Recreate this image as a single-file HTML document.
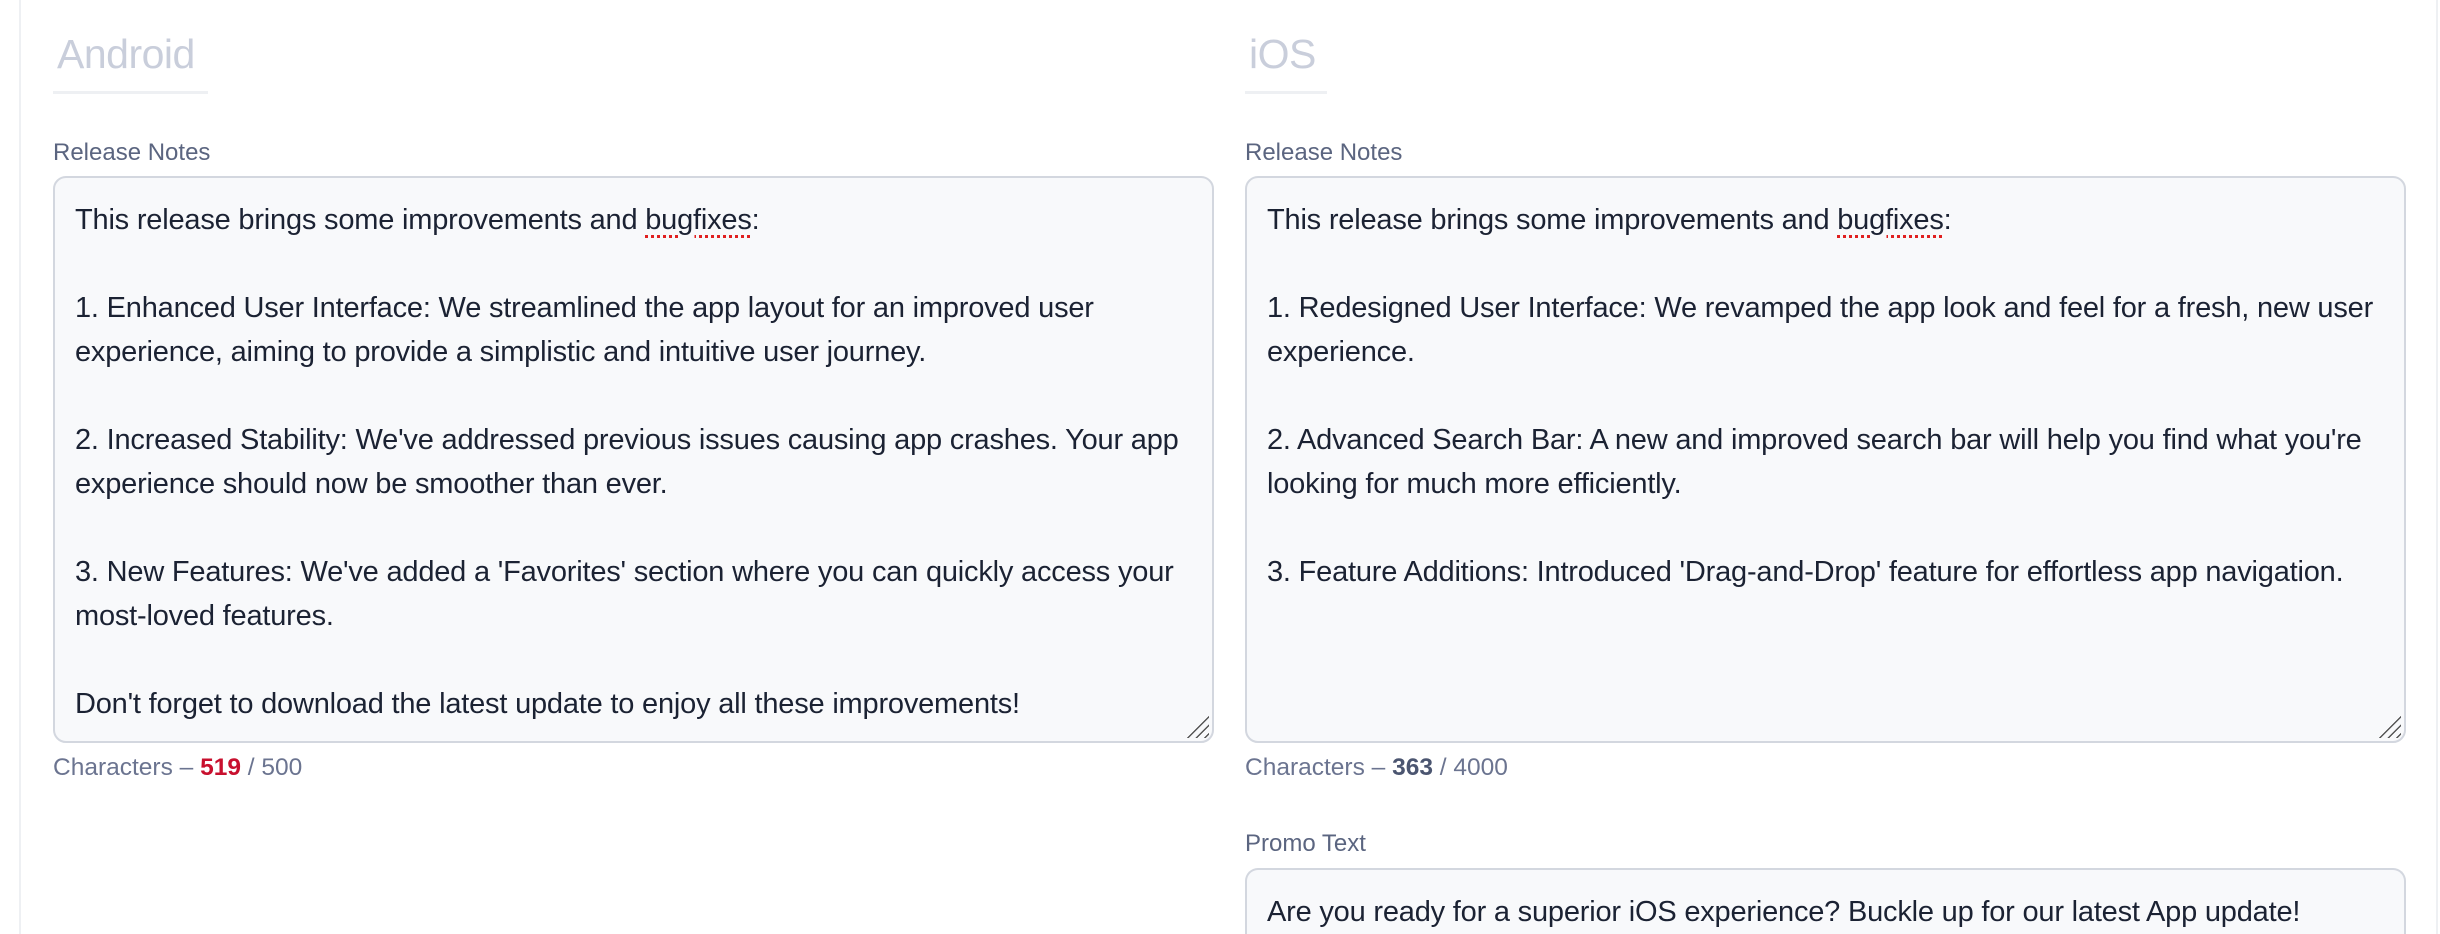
<!DOCTYPE html>
<html><head><meta charset="utf-8"><style>
*{box-sizing:border-box;margin:0;padding:0}
html,body{width:2440px;height:934px;overflow:hidden}
body{background:#fff;font-family:"Liberation Sans",sans-serif;position:relative}
.lb{position:absolute;left:19px;top:0;width:2px;height:934px;background:#eef0f3}
.rb{position:absolute;left:2436px;top:0;width:2px;height:934px;background:#eef0f3}
.col{position:absolute;top:0;width:1161px}
.title{position:absolute;top:31px;left:4px;font-size:41px;color:#c9cedb;letter-spacing:-0.5px}
.uline{position:absolute;top:91px;left:0;width:155px;height:3px;background:#eef0f3}
.label{position:absolute;font-size:24px;color:#5b6580}
.ta{position:absolute;left:0;width:1161px;background:#f8f9fb;border:2px solid #d3d7df;border-radius:13px;padding:20px 16px 20px 20px;font-size:29px;line-height:44px;color:#1b2233;white-space:pre-wrap;letter-spacing:-0.2px}
.sp{text-decoration:underline dotted #e02020;text-decoration-thickness:3px;text-underline-offset:6px}
.grip{position:absolute;right:3px;bottom:3px;width:26px;height:26px;background:repeating-linear-gradient(135deg,transparent 0 3px,#555 3px 4.5px,transparent 4.5px 6px);clip-path:polygon(100% 0,100% 100%,0 100%)}
.cnt{position:absolute;font-size:24.5px;color:#6b7490}
</style></head><body>
<div class="lb"></div><div class="rb"></div>
<div class="col" style="left:53px">
<div class="title">Android</div><div class="uline"></div>
<div class="label" style="top:139px">Release Notes</div>
<div class="ta" style="top:176px;height:567px">This release brings some improvements and <span class="sp">bugfixes</span>:

1. Enhanced User Interface: We streamlined the app layout for an improved user experience, aiming to provide a simplistic and intuitive user journey.

2. Increased Stability: We've addressed previous issues causing app crashes. Your app experience should now be smoother than ever.

3. New Features: We've added a 'Favorites' section where you can quickly access your most-loved features.

Don't forget to download the latest update to enjoy all these improvements!<div class="grip"></div></div>
<div class="cnt" style="top:754px">Characters – <b style="color:#c8102e">519</b> / 500</div>
</div>
<div class="col" style="left:1245px">
<div class="title">iOS</div><div class="uline" style="width:82px"></div>
<div class="label" style="top:139px">Release Notes</div>
<div class="ta" style="top:176px;height:567px">This release brings some improvements and <span class="sp">bugfixes</span>:

1. Redesigned User Interface: We revamped the app look and feel for a fresh, new user experience.

2. Advanced Search Bar: A new and improved search bar will help you find what you're looking for much more efficiently.

3. Feature Additions: Introduced 'Drag-and-Drop' feature for effortless app navigation.<div class="grip"></div></div>
<div class="cnt" style="top:754px">Characters – <b style="color:#4b5570">363</b> / 4000</div>
<div class="label" style="top:830px">Promo Text</div>
<div class="ta" style="top:868px;height:66px;border-bottom:none;border-radius:13px 13px 0 0;padding-bottom:0;overflow:hidden">Are you ready for a superior iOS experience? Buckle up for our latest App update!</div>
</div>
</body></html>
